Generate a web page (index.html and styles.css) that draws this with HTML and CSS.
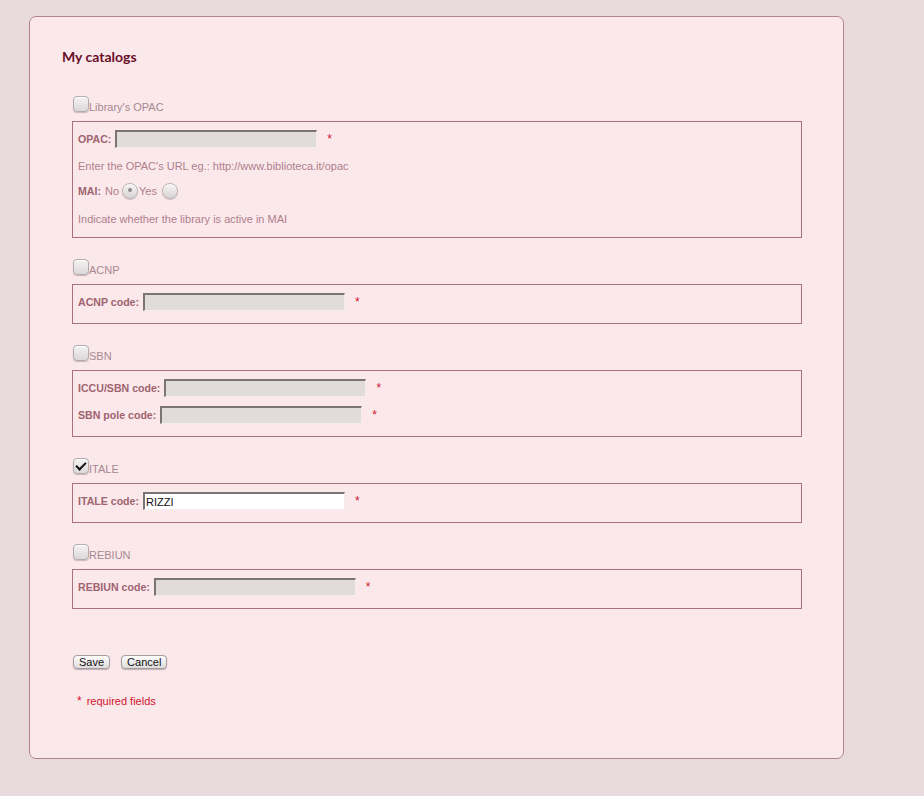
FILE: index.html
```html
<!DOCTYPE html>
<html>
<head>
<meta charset="utf-8">
<link rel="stylesheet" href="styles.css">
</head>
<body>
<div class="panel">
  <h2 class="title">My catalogs</h2>

  <div class="section first">
    <div class="check-row"><input type="checkbox" class="cb"><span class="cb-label">Library's OPAC</span></div>
    <div class="box box-opac">
      <div class="row"><span class="lbl">OPAC:</span><input type="text" class="field"><span class="req">*</span></div>
      <div class="hint hint1">Enter the OPAC's URL eg.: http://www.biblioteca.it/opac</div>
      <div class="row radio-row"><span class="lbl">MAI:</span><span class="opt">No</span><input type="radio" name="mai" class="rd" checked><span class="opt">Yes</span><input type="radio" name="mai" class="rd rd2"></div>
      <div class="hint hint2">Indicate whether the library is active in MAI</div>
    </div>
  </div>

  <div class="section">
    <div class="check-row"><input type="checkbox" class="cb"><span class="cb-label">ACNP</span></div>
    <div class="box">
      <div class="row"><span class="lbl">ACNP code:</span><input type="text" class="field"><span class="req">*</span></div>
    </div>
  </div>

  <div class="section">
    <div class="check-row"><input type="checkbox" class="cb"><span class="cb-label">SBN</span></div>
    <div class="box">
      <div class="row"><span class="lbl">ICCU/SBN code:</span><input type="text" class="field"><span class="req">*</span></div>
      <div class="row row-next"><span class="lbl">SBN pole code:</span><input type="text" class="field"><span class="req">*</span></div>
    </div>
  </div>

  <div class="section">
    <div class="check-row"><input type="checkbox" class="cb" checked><span class="cb-label">ITALE</span></div>
    <div class="box">
      <div class="row"><span class="lbl">ITALE code:</span><input type="text" class="field active" value="RIZZI"><span class="req">*</span></div>
    </div>
  </div>

  <div class="section">
    <div class="check-row"><input type="checkbox" class="cb"><span class="cb-label">REBIUN</span></div>
    <div class="box">
      <div class="row"><span class="lbl">REBIUN code:</span><input type="text" class="field"><span class="req">*</span></div>
    </div>
  </div>

  <div class="buttons">
    <button class="btn">Save</button>
    <button class="btn">Cancel</button>
  </div>

  <div class="required"><span class="star">*</span>required fields</div>
</div>
</body>
</html>
```

FILE: styles.css
```css
html, body {
  margin: 0;
  padding: 0;
  background: #e9dadd;
}
body {
  font-family: "Liberation Sans", Arial, sans-serif;
  font-size: 11px;
  color: #a8808c;
}
.panel {
  margin: 16px 0 0 29px;
  width: 815px;
  height: 743px;
  box-sizing: border-box;
  border: 1px solid #b48390;
  border-radius: 7px;
  background: #fae8eb;
  padding: 30px 0 0 32px;
}
.title {
  margin: 0;
  font-family: Lato, "Liberation Sans", sans-serif;
  font-weight: 700;
  font-size: 14px;
  line-height: 20px;
  color: #6a1029;
}
.section {
  margin: 21px 0 0 10px;
  width: 730px;
}
.section.first {
  margin-top: 29px;
}
.check-row {
  display: flex;
  align-items: flex-start;
  height: 25px;
}
.cb {
  -webkit-appearance: none;
  appearance: none;
  margin: 0 0 0 1px;
  width: 16px;
  height: 16px;
  box-sizing: border-box;
  border: 1px solid #b3acae;
  border-radius: 4px;
  background: linear-gradient(#f4f2f2, #dcd8d9);
  box-shadow: inset 0 1px 0 #ffffff, 0 1px 1px rgba(120, 90, 100, 0.35);
  position: relative;
}
.cb:checked::after {
  content: "";
  position: absolute;
  left: 4px;
  top: 1px;
  width: 4px;
  height: 8px;
  border: solid #111;
  border-width: 0 2.5px 2.5px 0;
  transform: rotate(45deg);
}
.cb-label {
  line-height: 11px;
  margin-top: 6px;
  color: #a88791;
}
.box {
  border: 1px solid #a9717f;
  padding: 8px 5px 12px;
}
.box.box-opac {
  padding-bottom: 11px;
}
.row {
  display: flex;
  align-items: center;
  height: 18px;
}
.row-next {
  margin-top: 9px;
}
.lbl {
  font-weight: bold;
  font-size: 10.6px;
  color: #a0636f;
  margin-right: 4px;
}
.field {
  -webkit-appearance: none;
  appearance: none;
  margin: 0;
  width: 202px;
  height: 18px;
  box-sizing: border-box;
  padding: 0 1px;
  background: #e1dbd9;
  border-style: solid;
  border-width: 2px 1px 1px 2px;
  border-color: #7a7476 #f4eef0 #f4eef0 #7a7476;
  font-family: "Liberation Sans", Arial, sans-serif;
  font-size: 11px;
  color: #111;
  outline: none;
}
.field.active {
  background: #ffffff;
}
.req {
  color: #d2132e;
  margin-left: 10px;
  font-size: 12px;
}
.hint {
  line-height: 14px;
  color: #b07e8b;
}
.hint1 {
  margin-top: 11px;
}
.radio-row {
  margin-top: 10px;
  height: 16px;
}
.hint2 {
  margin-top: 13px;
}
.opt {
  color: #b07e8b;
}
.rd {
  -webkit-appearance: none;
  appearance: none;
  margin: 0 1px 0 3px;
  width: 16px;
  height: 16px;
  box-sizing: border-box;
  border: 1px solid #b9b3b5;
  border-radius: 50%;
  background: linear-gradient(#f6f4f4, #d9d5d6);
  box-shadow: inset 0 1px 0 #fff, 0 1px 1px rgba(120, 90, 100, 0.3);
  position: relative;
}
.rd2 {
  margin-left: 5px;
}
.rd:checked::after {
  content: "";
  position: absolute;
  left: 5px;
  top: 4px;
  width: 4px;
  height: 4px;
  border-radius: 50%;
  background: #8e8a8b;
}
.buttons {
  display: flex;
  gap: 11px;
  margin: 46px 0 0 11px;
}
.btn {
  margin: 0;
  padding: 0 5px;
  height: 14px;
  box-sizing: border-box;
  border: 1px solid #a29c9e;
  border-radius: 4px;
  background: linear-gradient(#fdfdfd, #dedcdd);
  box-shadow: 0 1px 1px rgba(90, 70, 80, 0.35);
  font-family: "Liberation Sans", Arial, sans-serif;
  font-size: 11px;
  line-height: 11px;
  color: #111;
}
.required {
  margin: 25px 0 0 15px;
  line-height: 14px;
  color: #d2132e;
}
.star {
  font-size: 12px;
  margin-right: 5px;
}
```
